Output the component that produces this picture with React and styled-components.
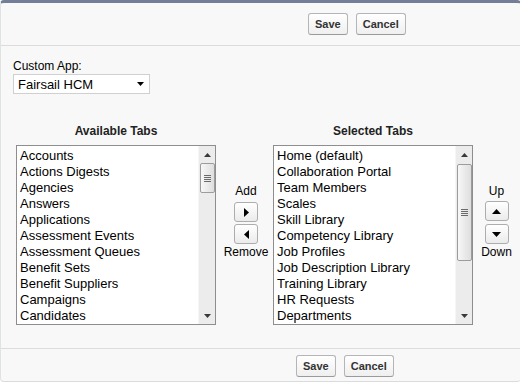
import React from "react";
import styled, { createGlobalStyle } from "styled-components";

const Global = createGlobalStyle`
  html, body { margin: 0; padding: 0; background: #ffffff; }
  body {
    font-family: "Liberation Sans", Arial, sans-serif;
    width: 520px;
    height: 383px;
    overflow: hidden;
  }
  * { box-sizing: border-box; }
`;

const Page = styled.div`
  width: 521px;
  background: #f8f8f8;
  border-top: 3px solid #747f97;
  border-left: 1px solid #e0e2e4;
  border-bottom: 1px solid #d9dbdd;
  border-radius: 4px 4px 4px 4px;
  display: flex;
  flex-direction: column;
`;

const ButtonBar = styled.div`
  height: ${(p) => p.$h}px;
  display: flex;
  align-items: ${(p) => (p.$top ? "flex-start" : "center")};
  gap: 8px;
  padding-left: ${(p) => p.$left}px;
  padding-top: ${(p) => p.$pt || 0}px;
  border-top: ${(p) => (p.$divider ? "1px solid #dcdcdc" : "none")};
`;

const Btn = styled.button`
  height: 22px;
  padding: 0 6px;
  margin: 0;
  font-family: "Liberation Sans", Arial, sans-serif;
  font-size: 11px;
  font-weight: bold;
  color: #333333;
  background: linear-gradient(#ffffff, #efefef);
  border: 1px solid #b5b5b5;
  border-bottom-color: #9a9a9a;
  border-radius: 3px;
  line-height: 20px;
`;

const Body = styled.div`
  height: 303px;
  border-top: 1px solid #dcdcdc;
  padding: 13px 0 0 12px;
`;

const FieldLabel = styled.div`
  font-size: 12px;
  line-height: 14px;
  color: #000;
`;

const Select = styled.div`
  margin-top: 1px;
  width: 137px;
  height: 20px;
  border: 1px solid #d0d0d0;
  background: #fff;
  display: flex;
  align-items: center;
  justify-content: space-between;
  padding: 0 5px 0 4px;
  font-size: 13px;
  color: #000;
`;

const Dueling = styled.div`
  margin: 30px 0 0 3px;
  display: flex;
  align-items: flex-start;
`;

const ListColumn = styled.div`
  width: 200px;
  display: flex;
  flex-direction: column;
`;

const Heading = styled.div`
  font-size: 12px;
  font-weight: bold;
  line-height: 14px;
  text-align: center;
  color: #222;
  margin-bottom: 7px;
`;

const ListBox = styled.div`
  height: 180px;
  border: 1px solid #8e8e8e;
  background: #fff;
  display: flex;
`;

const Items = styled.div`
  flex: 1;
  padding: 2px 0 0 3px;
  overflow: hidden;
`;

const Item = styled.div`
  font-size: 13px;
  line-height: 16px;
  color: #000;
  white-space: nowrap;
`;

const ScrollBar = styled.div`
  width: 17px;
  display: flex;
  flex-direction: column;
  background: #ececec;
  border-left: 1px solid #f6f6f6;
`;

const ScrollArrow = styled.div`
  height: 17px;
  display: flex;
  align-items: center;
  justify-content: center;
`;

const Track = styled.div`
  flex: 1;
  display: flex;
  flex-direction: column;
  align-items: center;
`;

const Thumb = styled.div`
  width: 15px;
  margin-top: ${(p) => p.$offset}px;
  height: ${(p) => p.$size}px;
  border: 1px solid #9c9c9c;
  border-radius: 2px;
  background: linear-gradient(to right, #f7f7f7, #dedede);
  display: flex;
  flex-direction: column;
  align-items: center;
  justify-content: center;
  gap: 1px;
`;

const Grip = styled.span`
  display: block;
  width: 7px;
  height: 1px;
  background: #6a6a6a;
`;

const MoverColumn = styled.div`
  width: ${(p) => p.$w}px;
  padding-top: 60px;
  padding-left: ${(p) => p.$pl || 0}px;
  display: flex;
  flex-direction: column;
  align-items: center;
`;

const MoverLabel = styled.div`
  font-size: 12px;
  line-height: 14px;
  color: #000;
`;

const ArrowButtons = styled.div`
  display: flex;
  flex-direction: column;
  gap: ${(p) => p.$gap}px;
  margin: ${(p) => p.$mt}px 0 1px;
`;

const ArrowBtn = styled.button`
  width: 24px;
  height: 20px;
  padding: 0;
  margin: 0;
  border: 1px solid #adadad;
  border-radius: 3px;
  background: linear-gradient(#ffffff, #ebebeb);
  display: flex;
  align-items: center;
  justify-content: center;
`;

const Tri = ({ dir, color = "#000", w = 8, h = 5 }) => {
  const pts = {
    down: `0,0 ${w},0 ${w / 2},${h}`,
    up: `0,${h} ${w},${h} ${w / 2},0`,
    right: `0,0 ${h},${w / 2} 0,${w}`,
    left: `${h},0 ${h},${w} 0,${w / 2}`,
  }[dir];
  const vw = dir === "left" || dir === "right" ? h : w;
  const vh = dir === "left" || dir === "right" ? w : h;
  return (
    <svg width={vw} height={vh} viewBox={`0 0 ${vw} ${vh}`}>
      <polygon points={pts} fill={color} />
    </svg>
  );
};

const available = [
  "Accounts",
  "Actions Digests",
  "Agencies",
  "Answers",
  "Applications",
  "Assessment Events",
  "Assessment Queues",
  "Benefit Sets",
  "Benefit Suppliers",
  "Campaigns",
  "Candidates",
];

const selected = [
  "Home (default)",
  "Collaboration Portal",
  "Team Members",
  "Scales",
  "Skill Library",
  "Competency Library",
  "Job Profiles",
  "Job Description Library",
  "Training Library",
  "HR Requests",
  "Departments",
];

const List = ({ title, items, thumbOffset, thumbSize }) => (
  <ListColumn>
    <Heading>{title}</Heading>
    <ListBox>
      <Items>
        {items.map((t) => (
          <Item key={t}>{t}</Item>
        ))}
      </Items>
      <ScrollBar>
        <ScrollArrow>
          <Tri dir="up" color="#3a3a3a" w={7} h={4} />
        </ScrollArrow>
        <Track>
          <Thumb $offset={thumbOffset} $size={thumbSize}>
            <Grip />
            <Grip />
            <Grip />
            <Grip />
          </Thumb>
        </Track>
        <ScrollArrow>
          <Tri dir="down" color="#3a3a3a" w={7} h={4} />
        </ScrollArrow>
      </ScrollBar>
    </ListBox>
  </ListColumn>
);

export default function App() {
  return (
    <>
      <Global />
      <Page>
        <ButtonBar $h={42} $left={307}>
          <Btn>Save</Btn>
          <Btn>Cancel</Btn>
        </ButtonBar>
        <Body>
          <FieldLabel>Custom App:</FieldLabel>
          <Select>
            <span>Fairsail HCM</span>
            <Tri dir="down" w={7} h={4} />
          </Select>
          <Dueling>
            <List title="Available Tabs" items={available} thumbOffset={0} thumbSize={30} />
            <MoverColumn $w={57} $pl={3}>
              <MoverLabel>Add</MoverLabel>
              <ArrowButtons $gap={2} $mt={4}>
                <ArrowBtn>
                  <Tri dir="right" w={9} h={5} />
                </ArrowBtn>
                <ArrowBtn>
                  <Tri dir="left" w={9} h={5} />
                </ArrowBtn>
              </ArrowButtons>
              <MoverLabel>Remove</MoverLabel>
            </MoverColumn>
            <List title="Selected Tabs" items={selected} thumbOffset={1} thumbSize={97} />
            <MoverColumn $w={47}>
              <MoverLabel>Up</MoverLabel>
              <ArrowButtons $gap={3} $mt={3}>
                <ArrowBtn>
                  <Tri dir="up" w={9} h={5} />
                </ArrowBtn>
                <ArrowBtn>
                  <Tri dir="down" w={9} h={5} />
                </ArrowBtn>
              </ArrowButtons>
              <MoverLabel>Down</MoverLabel>
            </MoverColumn>
          </Dueling>
        </Body>
        <ButtonBar $h={33} $left={295} $pt={6} $top $divider>
          <Btn>Save</Btn>
          <Btn>Cancel</Btn>
        </ButtonBar>
      </Page>
    </>
  );
}
